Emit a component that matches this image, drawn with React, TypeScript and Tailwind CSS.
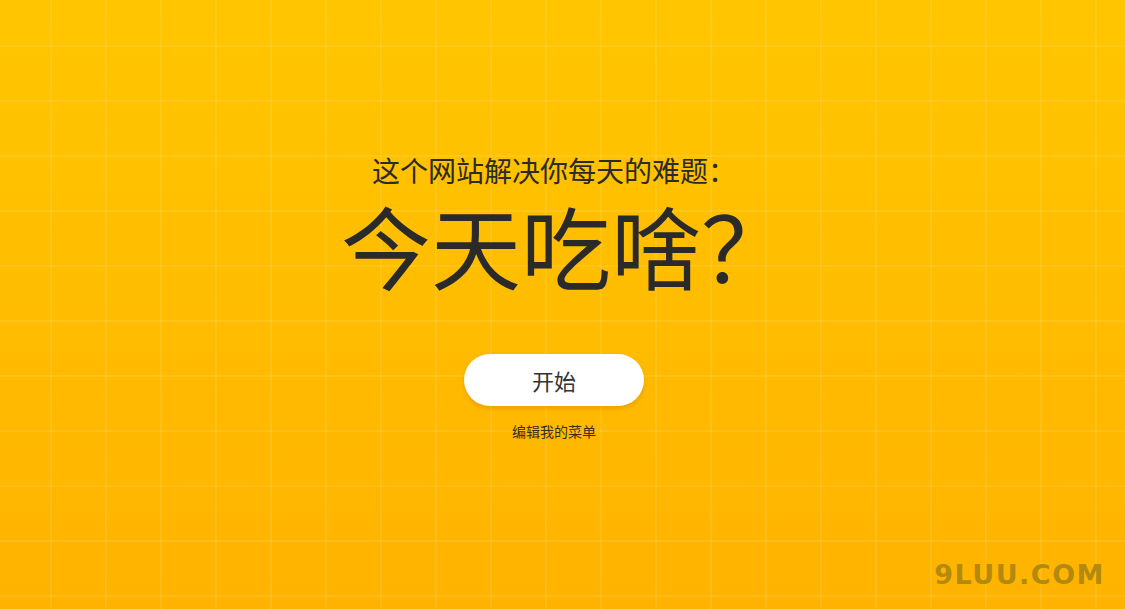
import React from "react";

export default function App() {
  return (
    <div className="relative h-[609px] w-full overflow-hidden bg-[linear-gradient(rgba(255,255,255,0.09)_2px,transparent_2px),linear-gradient(90deg,rgba(255,255,255,0.09)_2px,transparent_2px),linear-gradient(#ffc600,#ffb300)] bg-[size:55px_55px,55px_55px,100%_100%] bg-[position:50px_45px,50px_45px,0_0] font-['Noto_Sans_CJK_SC','Noto_Sans',sans-serif]">
      <div className="flex flex-col items-center pt-[156px] pr-[17px]">
        <h2 className="text-[28px] leading-[28px] text-[#2b2b2b] font-normal">这个网站解决你每天的难题：</h2>
        <h1 className="mt-[15px] ml-[24px] text-[90px] leading-[90px] text-[#2a2a2a] font-normal">今天吃啥？</h1>
        <button className="mt-[65px] flex h-[52px] w-[180px] items-center justify-center rounded-full bg-white text-[22px] text-[#333] shadow-[0_3px_4px_rgba(200,120,0,0.35)]">
          开始
        </button>
        <a className="mt-[18px] text-[14px] leading-[14px] text-[#3a2e10]">编辑我的菜单</a>
      </div>
      <div className="absolute right-[20px] bottom-[14px] font-['DejaVu_Sans',sans-serif] text-[27px] font-bold tracking-[1.5px] text-[#b3890f]">
        9LUU.COM
      </div>
    </div>
  );
}
